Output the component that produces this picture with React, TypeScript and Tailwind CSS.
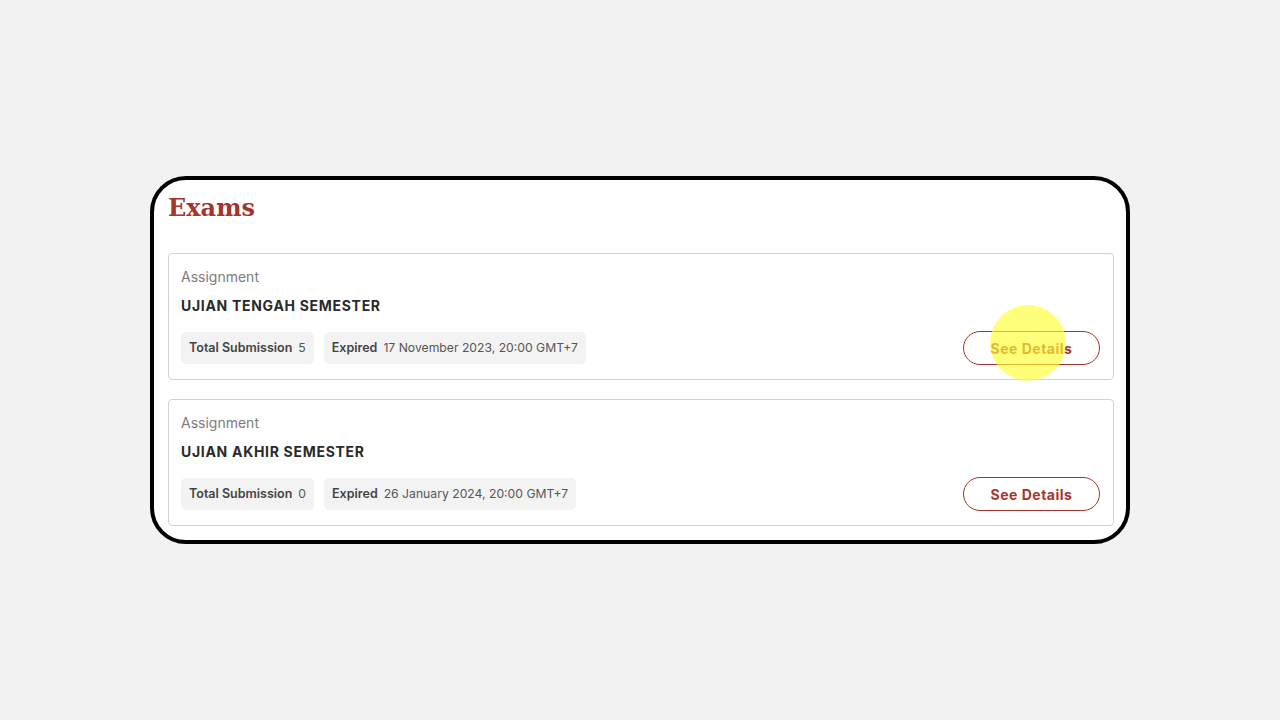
import React from 'react';

type Exam = {
  title: string;
  total: number;
  expired: string;
};

const exams: Exam[] = [
  { title: 'UJIAN TENGAH SEMESTER', total: 5, expired: '17 November 2023, 20:00 GMT+7' },
  { title: 'UJIAN AKHIR SEMESTER', total: 0, expired: '26 January 2024, 20:00 GMT+7' },
];

function Chip({ label, value }: { label: string; value: string | number }) {
  return (
    <div className="flex h-8 items-center gap-[6px] rounded-[5px] bg-[#f3f3f3] px-2">
      <span className="text-[12.5px] font-semibold text-[#444]">{label}</span>
      <span className="text-[12.2px] text-[#555]">{value}</span>
    </div>
  );
}

function ExamCard({ exam, highlight }: { exam: Exam; highlight?: boolean }) {
  return (
    <div className="rounded-[4px] border border-[#d2d2d2] pl-[12px] pr-[13px] pt-[14px] pb-[14px]">
      <div className="text-[14px] leading-[18px] text-[#7c7c7c]">Assignment</div>
      <div className="mt-[11px] text-[14px] font-bold leading-[18px] tracking-[0.7px] text-[#2a2a2a]">
        {exam.title}
      </div>
      <div className="mt-[16px] flex items-center justify-between">
        <div className="flex gap-[10px]">
          <Chip label="Total Submission" value={exam.total} />
          <Chip label="Expired" value={exam.expired} />
        </div>
        <div className="relative">
          <button className="h-[34px] w-[137px] rounded-full border border-[#a3352d] text-[14px] font-bold tracking-[0.5px] text-[#a3352d]">
            See Details
          </button>
          {highlight && (
            <div className="pointer-events-none absolute left-[27px] top-[-26px] h-[76px] w-[76px] rounded-full bg-[#ffff33]/65" />
          )}
        </div>
      </div>
    </div>
  );
}

export default function App() {
  return (
    <div
      className="flex min-h-screen items-center justify-center bg-[#f2f2f2]"
      style={{ fontFamily: 'Inter, "Noto Sans", sans-serif' }}
    >
      <div className="w-[980px] rounded-[36px] border-4 border-black bg-white pl-[14px] pr-[12px] pt-[12px] pb-[14px]">
        <h1
          className="text-[24px] font-bold leading-[32px] text-[#a3352d]"
          style={{ fontFamily: '"DejaVu Serif", "Liberation Serif", serif' }}
        >
          Exams
        </h1>
        <div className="mt-[29px] flex flex-col gap-[19px]">
          {exams.map((exam, i) => (
            <ExamCard key={exam.title} exam={exam} highlight={i === 0} />
          ))}
        </div>
      </div>
    </div>
  );
}
